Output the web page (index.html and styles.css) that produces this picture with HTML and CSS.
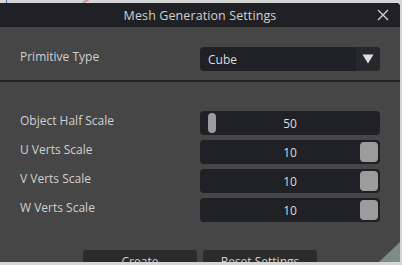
FILE: index.html
```html
<!DOCTYPE html>
<html>
<head>
<meta charset="utf-8">
<link rel="stylesheet" href="styles.css">
</head>
<body>
<div class="desk">
  <span class="mark-blue"></span>
  <span class="mark-red"></span>
  <div class="window">
    <div class="titlebar">
      <span class="title">Mesh Generation Settings</span>
      <svg class="close" width="12" height="12" viewBox="0 0 12 12"><path d="M1 1 L11 11 M11 1 L1 11" stroke="#d0d0d0" stroke-width="1.4" fill="none"/></svg>
    </div>
    <div class="content">
      <div class="row">
        <span class="label">Primitive Type</span>
        <div class="select">
          <span class="select-text">Cube</span>
          <span class="select-arrow"><svg width="12" height="10" viewBox="0 0 12 10"><path d="M0.5 0.5 H11.5 L6 9.5 Z" fill="#e0e0e0"/></svg></span>
        </div>
      </div>
      <div class="sep"></div>
      <div class="sliders">
        <div class="row">
          <span class="label">Object Half Scale</span>
          <div class="slider"><span class="handle thin"></span><span class="val">50</span></div>
        </div>
        <div class="row">
          <span class="label">U Verts Scale</span>
          <div class="slider"><span class="val">10</span><span class="handle square"></span></div>
        </div>
        <div class="row">
          <span class="label">V Verts Scale</span>
          <div class="slider"><span class="val">10</span><span class="handle square"></span></div>
        </div>
        <div class="row">
          <span class="label">W Verts Scale</span>
          <div class="slider"><span class="val">10</span><span class="handle square"></span></div>
        </div>
      </div>
      <div class="buttons">
        <div class="btn">Create</div>
        <div class="btn">Reset Settings</div>
      </div>
    </div>
    <span class="grip"></span>
  </div>
</div>
</body>
</html>
```
FILE: styles.css
```css
html, body {
  margin: 0;
  padding: 0;
  background: #d6d6d6;
  width: 402px;
  height: 265px;
  overflow: hidden;
}
.desk {
  position: relative;
  padding-top: 3px;
  height: 262px;
}
.mark-blue {
  position: absolute;
  left: 6px;
  top: 0;
  width: 1px;
  height: 3px;
  background: #4b78ad;
}
.mark-red {
  position: absolute;
  left: 83px;
  top: 0;
  width: 6px;
  height: 2px;
  background: #c8948a;
  transform: skewY(-25deg);
}
.window {
  position: relative;
  width: 400px;
  height: 259px;
  background: #464646;
  border-top-right-radius: 4px;
  overflow: hidden;
  font-family: "Open Sans", "DejaVu Sans", sans-serif;
  color: #d2d2d2;
}
.titlebar {
  height: 24px;
  background: #202124;
  display: flex;
  align-items: center;
  justify-content: center;
  position: relative;
}
.title {
  font-size: 12.5px;
  color: #d0d0d0;
  letter-spacing: 0.1px;
}
.close {
  position: absolute;
  right: 11px;
  top: 6px;
}
.content {
  display: flex;
  flex-direction: column;
  padding-top: 20px;
}
.row {
  display: flex;
  align-items: center;
  padding-left: 20px;
  padding-right: 20px;
  height: 24px;
}
.label {
  flex: 1;
  align-self: flex-start;
  padding-top: 2px;
  font-size: 12px;
  line-height: 16px;
  color: #d0d0d0;
}
.select {
  width: 180px;
  height: 24px;
  background: #202124;
  border-radius: 4px;
  display: flex;
  align-items: center;
  overflow: hidden;
}
.select-text {
  flex: 1;
  padding-left: 8px;
  font-size: 12px;
  color: #dcdcdc;
}
.select-arrow {
  width: 24px;
  height: 24px;
  background: #27282b;
  display: flex;
  align-items: center;
  justify-content: center;
}
.sep {
  margin-top: 9px;
  height: 2px;
  background: #232323;
}
.sliders {
  margin-top: 29px;
  display: flex;
  flex-direction: column;
  gap: 5px;
}
.slider {
  width: 180px;
  height: 24px;
  background: #202124;
  border-radius: 4px;
  position: relative;
  display: flex;
  align-items: center;
}
.val {
  position: absolute;
  left: 0;
  right: 0;
  text-align: center;
  font-size: 12px;
  color: #dcdcdc;
}
.handle {
  position: absolute;
  background: #9c9c9c;
}
.handle.thin {
  left: 8px;
  top: 2px;
  width: 8px;
  height: 20px;
  border-radius: 4px;
}
.handle.square {
  right: 2px;
  top: 2px;
  width: 18px;
  height: 20px;
  border-radius: 4px;
}
.buttons {
  margin-top: 28px;
  display: flex;
  justify-content: center;
  gap: 6px;
}
.btn {
  width: 114px;
  padding: 4px 0 6px;
  line-height: 16px;
  text-align: center;
  background: #2b2b2b;
  border-radius: 3px;
  color: #d0d0d0;
  font-size: 12px;
}
.grip {
  position: absolute;
  right: 0;
  bottom: 0;
  width: 21px;
  height: 20px;
  background: #7d8c89;
  clip-path: polygon(100% 0, 100% 100%, 0 100%);
}
```
